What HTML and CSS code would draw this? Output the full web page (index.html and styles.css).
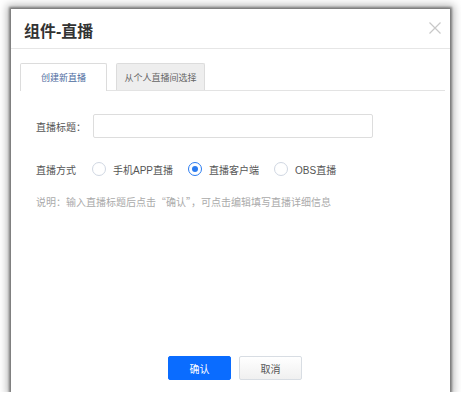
FILE: index.html
```html
<!DOCTYPE html>
<html lang="zh">
<head>
<meta charset="utf-8">
<link rel="stylesheet" href="styles.css">
</head>
<body>
<div class="dialog">
  <div class="header">
    <div class="title">组件-直播</div>
    <div class="close">
      <svg width="12" height="12" viewBox="0 0 12 12"><path d="M0.5 0.5L11.5 11.5M11.5 0.5L0.5 11.5" stroke="#c8c8c8" stroke-width="1.2" fill="none"/></svg>
    </div>
  </div>
  <div class="body">
    <div class="tabs">
      <div class="tab active">创建新直播</div>
      <div class="tab">从个人直播间选择</div>
    </div>
    <div class="form">
      <div class="row">
        <span class="label">直播标题：</span>
        <div class="input"></div>
      </div>
      <div class="row radios">
        <span class="label">直播方式</span>
        <span class="radio"><span class="circle"></span>手机APP直播</span>
        <span class="radio"><span class="circle checked"></span>直播客户端</span>
        <span class="radio"><span class="circle"></span>OBS直播</span>
      </div>
      <div class="note">说明：输入直播标题后点击“确认”，可点击编辑填写直播详细信息</div>
    </div>
  </div>
  <div class="footer">
    <div class="btn primary">确认</div>
    <div class="btn">取消</div>
  </div>
</div>
</body>
</html>
```
FILE: styles.css
```css
html, body {
  margin: 0;
  padding: 0;
  background: #fff;
}
body {
  padding: 9px 0 0 11px;
  font-family: "Liberation Sans", "Noto Sans CJK SC", sans-serif;
  color: #555;
}
.dialog {
  width: 439px;
  height: 383px;
  background: #fff;
  box-shadow: 0 0 2px 2px rgba(0,0,0,0.38), 0 0 8px 4px rgba(0,0,0,0.28);
  display: flex;
  flex-direction: column;
  box-sizing: border-box;
}
.header {
  height: 39px;
  border-bottom: 1px solid #e6e6e6;
  display: flex;
  align-items: center;
  justify-content: space-between;
  padding: 0 9px 0 13px;
  flex-shrink: 0;
}
.title {
  font-size: 16px;
  font-weight: bold;
  color: #333;
  padding-top: 2px;
}
.close {
  display: flex;
  margin-top: -2px;
}
.body {
  flex: 1;
  padding: 14px 5px 0 9px;
}
.tabs {
  display: flex;
  gap: 9px;
  border-bottom: 1px solid #e3e3e3;
  height: 27px;
}
.tab {
  height: 27px;
  box-sizing: border-box;
  border: 1px solid #dcdcdc;
  border-bottom: none;
  border-radius: 2px 2px 0 0;
  background: #eeeeee;
  font-size: 9px;
  color: #666;
  display: flex;
  align-items: center;
  justify-content: center;
  width: 89px;
}
.tab.active {
  background: #fff;
  color: #4a6a9e;
  width: 87px;
  height: 28px;
  margin-bottom: -1px;
}
.form {
  padding: 23px 0 0 16px;
}
.row {
  display: flex;
  align-items: center;
}
.label {
  font-size: 10px;
  color: #555;
  width: 57px;
}
.input {
  width: 280px;
  height: 24px;
  box-sizing: border-box;
  border: 1px solid #dddddd;
  border-radius: 2px;
}
.radios {
  margin-top: 24px;
  height: 14px;
}
.radio {
  display: flex;
  align-items: center;
  font-size: 10px;
  color: #555;
  margin-right: 15px;
}
.circle {
  width: 14px;
  height: 14px;
  box-sizing: border-box;
  border: 1px solid #d0d7e2;
  border-radius: 50%;
  margin-right: 7px;
  display: inline-flex;
  align-items: center;
  justify-content: center;
}
.circle.checked {
  border-color: #2b7cf0;
}
.circle.checked::after {
  content: "";
  width: 6px;
  height: 6px;
  border-radius: 50%;
  background: #2b7cf0;
}
.label + .radio .circle {
  margin-left: -1px;
}
.note {
  margin-top: 18px;
  font-size: 10px;
  color: #aaaaaa;
  font-family: "Noto Sans CJK SC", sans-serif;
}
.footer {
  display: flex;
  justify-content: center;
  gap: 8px;
  padding: 0 0 12px 9px;
}
.btn {
  width: 63px;
  height: 24px;
  box-sizing: border-box;
  border: 1px solid #d8dde3;
  border-radius: 2px;
  background: linear-gradient(#ffffff, #f0f0f0);
  font-size: 10px;
  color: #555;
  display: flex;
  align-items: center;
  justify-content: center;
}
.btn.primary {
  background: #0a6cff;
  border-color: #0a6cff;
  color: #fff;
}
```
